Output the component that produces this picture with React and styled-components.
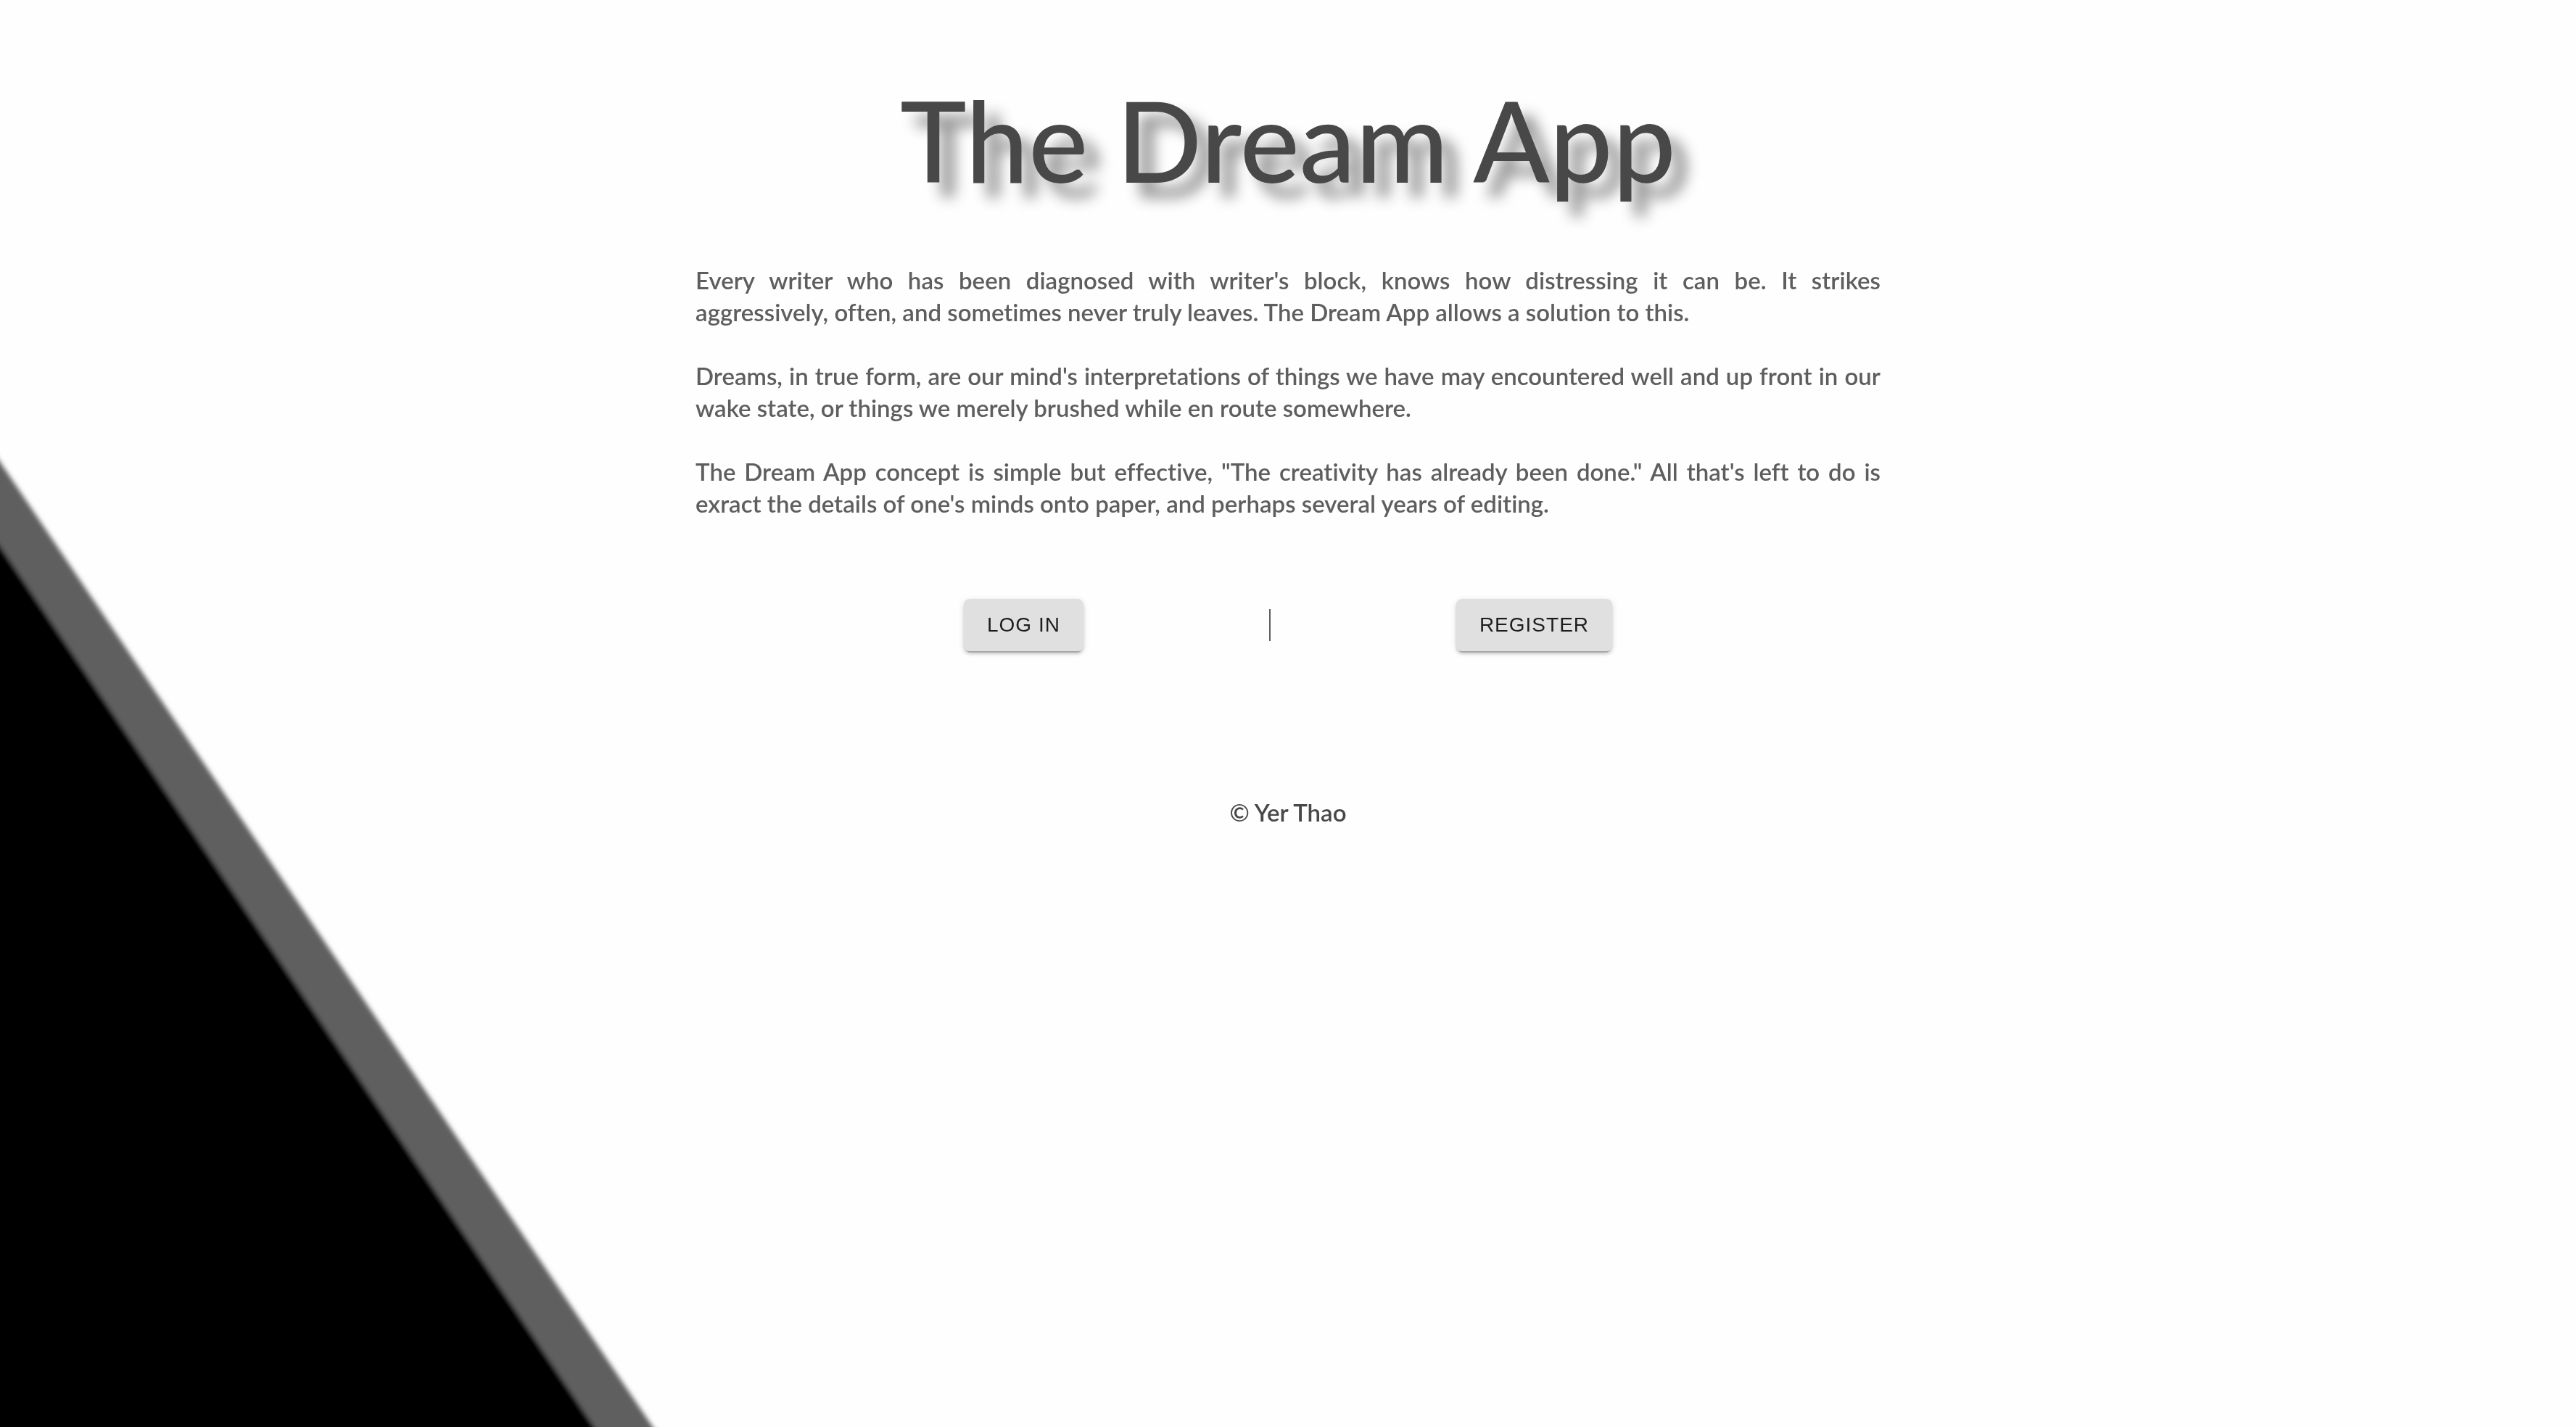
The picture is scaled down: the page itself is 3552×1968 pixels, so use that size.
import React from "react";
import styled, { createGlobalStyle } from "styled-components";

const GlobalStyle = createGlobalStyle`
  *, *::before, *::after { box-sizing: border-box; }
  body {
    margin: 0;
    background: #fefefe;
    color: #5e5e5e;
    font-family: Lato, "Open Sans", sans-serif;
    font-size: 33px;
    font-weight: 600;
    font-variant-ligatures: none;
    line-height: 44px;
  }
`;

const Backdrop = styled.svg`
  position: fixed;
  inset: 0;
  z-index: -1;
  width: 100%;
  height: 100%;
`;

const Page = styled.main`
  display: flex;
  flex-direction: column;
  align-items: center;
  padding: 92px 0 120px;
`;

const Title = styled.h1`
  margin: 0 0 72px;
  color: #484848;
  font-size: 155px;
  font-weight: 500;
  line-height: 200px;
  text-align: center;
  text-shadow: 20px 20px 20px #888;
`;

const Intro = styled.section`
  display: flex;
  flex-direction: column;
  gap: 44px;
  width: 46%;
  min-width: 640px;
  text-align: justify;
`;

const Paragraph = styled.p`
  margin: 0;
`;

const Actions = styled.div`
  display: flex;
  align-items: center;
  justify-content: center;
  gap: 256px;
  margin-top: 110px;
`;

const Button = styled.button`
  padding: 12px 32px;
  border: 0;
  border-radius: 8px;
  background: #e0e0e0;
  color: rgba(0, 0, 0, 0.87);
  font-family: "Liberation Sans", Arial, sans-serif;
  font-size: 28px;
  font-weight: 500;
  line-height: 48px;
  letter-spacing: 1px;
  text-transform: uppercase;
  cursor: pointer;
  box-shadow: 0 6px 2px -4px rgba(0, 0, 0, 0.2), 0 4px 4px 0 rgba(0, 0, 0, 0.14),
    0 2px 10px 0 rgba(0, 0, 0, 0.12);
`;

const Divider = styled.span`
  width: 2px;
  height: 44px;
  background: #5e5e5e;
`;

const Footer = styled.footer`
  margin-top: 200px;
  color: #484848;
`;

const paragraphs = [
  "Every writer who has been diagnosed with writer's block, knows how distressing it can be. It strikes aggressively,\u00a0often, and sometimes never truly leaves. The Dream App allows a solution to this.",
  "Dreams, in true form, are our mind's interpretations of things we have may encountered well and up front in our wake state, or things we merely brushed while en route somewhere.",
  "The Dream App concept is simple but effective, \"The creativity has already been done.\" All that's left to do is exract the details of one's minds onto paper, and perhaps several years of editing.",
];

export default function App() {
  return (
    <>
      <GlobalStyle />
      <Backdrop viewBox="0 0 3552 1968" preserveAspectRatio="xMinYMax slice" aria-hidden="true">
        <defs>
          <filter id="soften" x="-5%" y="-5%" width="110%" height="110%">
            <feGaussianBlur stdDeviation="3" />
          </filter>
        </defs>
        <g filter="url(#soften)">
          <polygon points="-40,578 940,2027 -40,2027" fill="#5e5e5e" />
          <polygon points="-40,694 859,2027 -40,2027" fill="#000" />
        </g>
      </Backdrop>
      <Page>
        <Title>The Dream App</Title>
        <Intro>
          {paragraphs.map((text) => (
            <Paragraph key={text}>{text}</Paragraph>
          ))}
        </Intro>
        <Actions>
          <Button type="button">Log in</Button>
          <Divider />
          <Button type="button">Register</Button>
        </Actions>
        <Footer>© Yer Thao</Footer>
      </Page>
    </>
  );
}
